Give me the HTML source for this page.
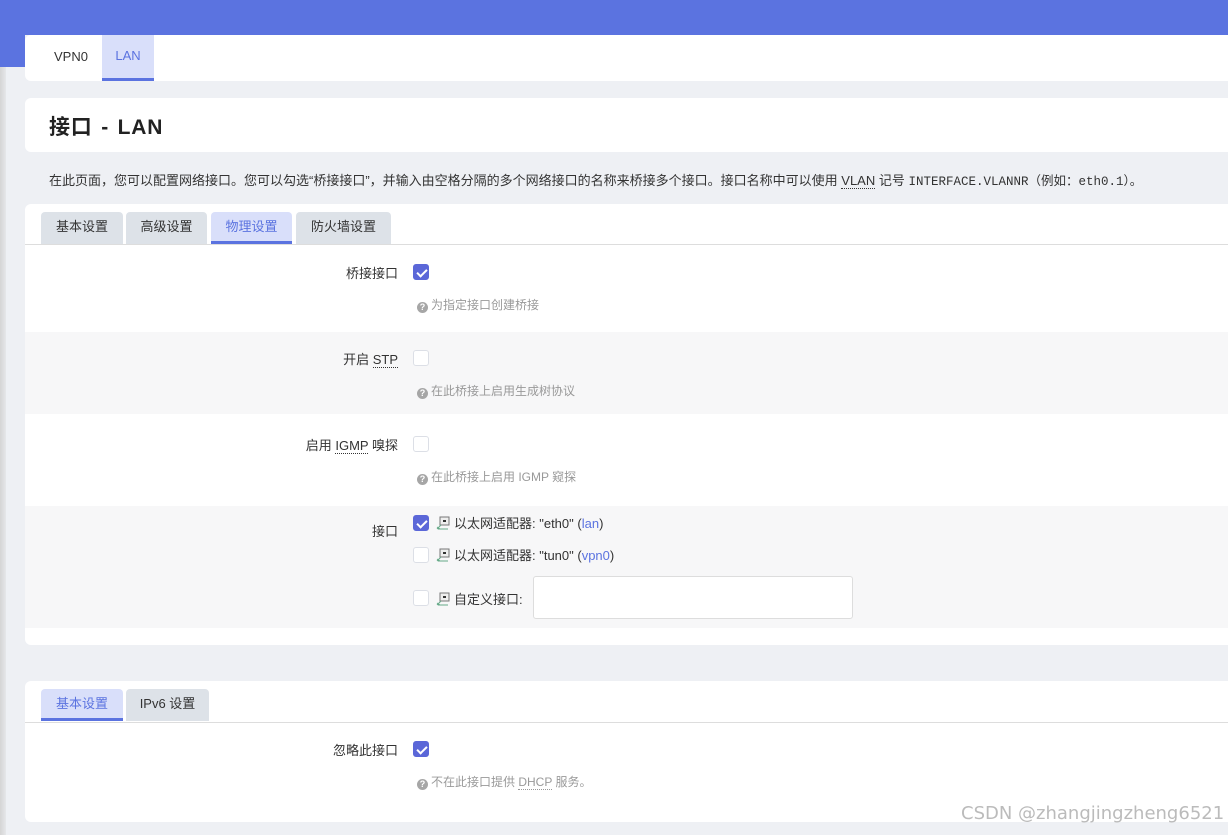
<!DOCTYPE html>
<html><head><meta charset="utf-8"><style>
*{box-sizing:border-box;margin:0;padding:0}
body{width:1228px;height:835px;position:relative;overflow:hidden;background:#eef0f4;font-family:"Liberation Sans","Noto Sans CJK SC",sans-serif;color:#333;font-size:13px}
.abs{position:absolute}
.card{position:absolute;background:#fff;border-radius:6px 0 0 6px}
.tab{position:absolute;height:32px;line-height:30px;text-align:center;font-size:13px;color:#333;background:#dde2e8;border-radius:4px 4px 0 0}
.tab.on{background:#d9dffa;color:#5b73e0;border-bottom:3px solid #5b73e0}
.lbl{position:absolute;right:830px;font-size:13px;color:#333;text-align:right;white-space:nowrap}
.cb{position:absolute;left:413px;width:16px;height:16px;border:1px solid #dcdfe6;border-radius:3px;background:#fff}
.cb.on{background:#5b67d8;border-color:#5b67d8}
.cb.on:after{content:"";position:absolute;left:4.5px;top:1.5px;width:4px;height:8px;border:solid #fff;border-width:0 2px 2px 0;transform:rotate(45deg)}
.help{position:absolute;left:417px;font-size:12px;color:#999;white-space:nowrap}
.q{display:inline-block;width:11px;height:11px;border-radius:50%;background:#a6a6a6;color:#fff;font-size:9px;line-height:11px;text-align:center;font-weight:bold;margin-right:3px;vertical-align:-1px}
.u{border-bottom:1px dotted #333}
.ic{display:inline-block;width:14px;height:14px;vertical-align:-2px;margin-right:4px}
.opt{position:absolute;left:436px;font-size:13px;color:#333;white-space:nowrap}
.blue{color:#5b73e0}
</style></head><body>
<div class="abs" style="left:0;top:0;width:1228px;height:35px;background:#5b73e0"></div>
<div class="abs" style="left:0;top:35px;width:25px;height:32px;background:#5b73e0"></div>
<div class="abs" style="left:0;top:67px;width:6px;height:768px;background:linear-gradient(90deg,#d4d4d4,#e6e7ea)"></div>

<div class="card" style="left:25px;top:35px;width:1203px;height:46px">
  <div class="abs" style="left:29px;top:14px;font-size:13px">VPN0</div>
  <div class="abs" style="left:77px;top:0;width:52px;height:46px;background:#d9dffa;border-bottom:3px solid #5b73e0;color:#5b73e0;text-align:center;line-height:42px">LAN</div>
</div>

<div class="card" style="left:25px;top:98px;width:1203px;height:54px">
  <div class="abs" style="left:24px;top:13px;font-size:21px;font-weight:bold;color:#222;letter-spacing:0.8px;word-spacing:2px">接口 - LAN</div>
</div>

<div class="abs" style="left:49px;top:170px;font-size:13px;white-space:nowrap">在此页面，您可以配置网络接口。您可以勾选“桥接接口”，并输入由空格分隔的多个网络接口的名称来桥接多个接口。接口名称中可以使用 <span class="u">VLAN</span> 记号 <span style="font-family:'Liberation Mono',monospace;font-size:12.5px">INTERFACE.VLANNR（例如：eth0.1）。</span></div>

<div class="card" style="left:25px;top:204px;width:1203px;height:441px;overflow:hidden">
  <div class="tab" style="left:16px;top:8px;width:82px">基本设置</div>
  <div class="tab" style="left:101px;top:8px;width:81px">高级设置</div>
  <div class="tab on" style="left:186px;top:8px;width:81px">物理设置</div>
  <div class="tab" style="left:271px;top:8px;width:95px">防火墙设置</div>
  <div class="abs" style="left:0;top:40px;width:1203px;height:1px;background:#ddd"></div>
  <div class="abs" style="left:0;top:128px;width:1203px;height:82px;background:#f7f7f8"></div>
  <div class="abs" style="left:0;top:302px;width:1203px;height:122px;background:#f7f7f8"></div>
</div>

<div class="lbl" style="top:263px">桥接接口</div>
<div class="cb on" style="top:264px"></div>
<div class="help" style="top:296px"><span class="q">?</span>为指定接口创建桥接</div>

<div class="lbl" style="top:349px">开启 <span class="u">STP</span></div>
<div class="cb" style="top:350px"></div>
<div class="help" style="top:382px"><span class="q">?</span>在此桥接上启用生成树协议</div>

<div class="lbl" style="top:435px">启用 <span class="u">IGMP</span> 嗅探</div>
<div class="cb" style="top:436px"></div>
<div class="help" style="top:468px"><span class="q">?</span>在此桥接上启用 IGMP 窥探</div>

<div class="lbl" style="top:521px">接口</div>
<div class="cb on" style="top:515px"></div>
<div class="opt" style="top:513px"><svg class="ic" viewBox="0 0 14 14"><rect x="4" y="1" width="9" height="8" fill="#eee" stroke="#777"/><rect x="7" y="4" width="3" height="2" fill="#333"/><path d="M1 13 L5 9 M1 11 L4 13 M2 13h10" stroke="#6a8" fill="none"/></svg>以太网适配器: "eth0" (<span class="blue">lan</span>)</div>
<div class="cb" style="top:547px"></div>
<div class="opt" style="top:545px"><svg class="ic" viewBox="0 0 14 14"><rect x="4" y="1" width="9" height="8" fill="#eee" stroke="#777"/><rect x="7" y="4" width="3" height="2" fill="#333"/><path d="M1 13 L5 9 M1 11 L4 13 M2 13h10" stroke="#6a8" fill="none"/></svg>以太网适配器: "tun0" (<span class="blue">vpn0</span>)</div>
<div class="cb" style="top:590px"></div>
<div class="opt" style="top:589px"><svg class="ic" viewBox="0 0 14 14"><rect x="4" y="1" width="9" height="8" fill="#eee" stroke="#777"/><rect x="7" y="4" width="3" height="2" fill="#333"/><path d="M1 13 L5 9 M1 11 L4 13 M2 13h10" stroke="#6a8" fill="none"/></svg>自定义接口:</div>
<div class="abs" style="left:533px;top:576px;width:320px;height:43px;background:#fff;border:1px solid #ddd;border-radius:3px"></div>

<div class="card" style="left:25px;top:681px;width:1203px;height:141px">
  <div class="tab on" style="left:16px;top:8px;width:82px">基本设置</div>
  <div class="tab" style="left:101px;top:8px;width:83px">IPv6 设置</div>
  <div class="abs" style="left:0;top:41px;width:1203px;height:1px;background:#ddd"></div>
</div>
<div class="lbl" style="top:740px">忽略此接口</div>
<div class="cb on" style="top:741px"></div>
<div class="help" style="top:773px"><span class="q">?</span>不在此接口提供 <span class="u" style="border-color:#999">DHCP</span> 服务。</div>

<div class="abs" style="left:961px;top:803px;font-size:18px;color:#bbb;font-family:'DejaVu Sans',sans-serif;white-space:nowrap">CSDN @zhangjingzheng6521</div>
</body></html>
